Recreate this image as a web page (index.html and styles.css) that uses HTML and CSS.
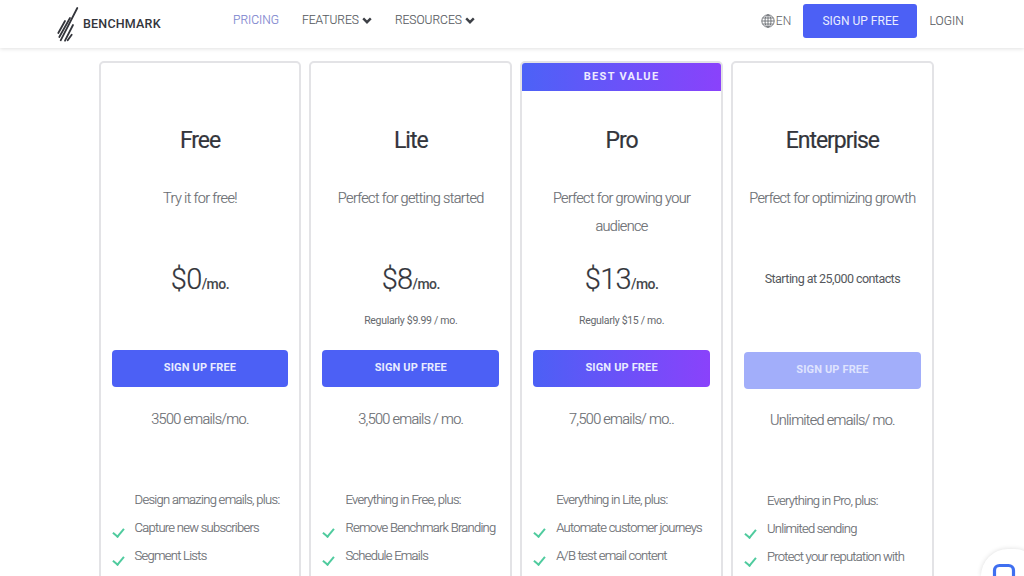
FILE: index.html
```html
<!DOCTYPE html>
<html lang="en">
<head>
<meta charset="utf-8">
<title>Benchmark Pricing</title>
<link rel="stylesheet" href="styles.css">
</head>
<body>
<header class="topbar">
  <a class="logo">
    <svg class="logo-mark" viewBox="0 0 24 36" aria-hidden="true">
      <g stroke="#33353b" stroke-width="1.8" stroke-linecap="round">
        <line x1="20.3" y1="2" x2="3.7" y2="34.3"/>
        <line x1="1.3" y1="27" x2="8" y2="15"/>
        <line x1="2.3" y1="31" x2="13" y2="12"/>
        <line x1="16" y1="19" x2="8" y2="34.7"/>
        <line x1="14.7" y1="28.7" x2="10.7" y2="34.3"/>
      </g>
    </svg>
    <span class="logo-text">BENCHMARK</span>
  </a>
  <nav class="nav">
    <a class="nav-link active">PRICING</a>
    <a class="nav-link">FEATURES <svg class="chev" viewBox="0 0 10 7"><path d="M1.2 1.4 5 5.2 8.8 1.4"/></svg></a>
    <a class="nav-link">RESOURCES <svg class="chev" viewBox="0 0 10 7"><path d="M1.2 1.4 5 5.2 8.8 1.4"/></svg></a>
  </nav>
  <div class="actions">
    <span class="lang">
      <svg class="globe" viewBox="0 0 14 14"><circle cx="7" cy="7" r="6.2"/><ellipse cx="7" cy="7" rx="3" ry="6.2"/><path d="M7 .8v12.4M.8 7h12.4M1.6 4h10.8M1.6 10h10.8"/></svg>EN
    </span>
    <a class="top-cta">SIGN UP FREE</a>
    <a class="login">LOGIN</a>
  </div>
</header>

<main class="plans">
  <section class="plan">
    <h2>Free</h2>
    <p class="tagline">Try it for free!</p>
    <div class="pricing">
      <div class="price"><b>$0</b><span>/mo.</span></div>
    </div>
    <a class="cta">SIGN UP FREE</a>
    <p class="emails">3500 emails/mo.</p>
    <p class="lead">Design amazing emails, plus:</p>
    <ul class="features">
      <li>Capture new subscribers</li>
      <li>Segment Lists</li>
    </ul>
  </section>
  <section class="plan">
    <h2>Lite</h2>
    <p class="tagline">Perfect for getting started</p>
    <div class="pricing">
      <div class="price"><b>$8</b><span>/mo.</span></div>
      <p class="regular">Regularly $9.99 / mo.</p>
    </div>
    <a class="cta">SIGN UP FREE</a>
    <p class="emails">3,500 emails / mo.</p>
    <p class="lead">Everything in Free, plus:</p>
    <ul class="features">
      <li>Remove Benchmark Branding</li>
      <li>Schedule Emails</li>
    </ul>
  </section>
  <section class="plan plan-best">
    <div class="ribbon">BEST VALUE</div>
    <h2>Pro</h2>
    <p class="tagline">Perfect for growing your audience</p>
    <div class="pricing">
      <div class="price"><b>$13</b><span>/mo.</span></div>
      <p class="regular">Regularly $15 / mo.</p>
    </div>
    <a class="cta cta-gradient">SIGN UP FREE</a>
    <p class="emails">7,500 emails/ mo..</p>
    <p class="lead">Everything in Lite, plus:</p>
    <ul class="features">
      <li>Automate customer journeys</li>
      <li>A/B test email content</li>
    </ul>
  </section>
  <section class="plan plan-enterprise">
    <h2>Enterprise</h2>
    <p class="tagline">Perfect for optimizing growth</p>
    <div class="pricing">
      <p class="starting">Starting at 25,000 contacts</p>
    </div>
    <a class="cta cta-muted">SIGN UP FREE</a>
    <p class="emails">Unlimited emails/ mo.</p>
    <p class="lead">Everything in Pro, plus:</p>
    <ul class="features">
      <li>Unlimited sending</li>
      <li>Protect your reputation with</li>
    </ul>
  </section>
</main>

<div class="chat-bubble">
  <svg viewBox="0 0 24 24" width="24" height="24"><rect x="2.5" y="2.5" width="19" height="19" rx="5"/></svg>
</div>
</body>
</html>
```
FILE: styles.css
```css
* { box-sizing: border-box; }
html { overflow: hidden; height: 576px; }
body {
  margin: 0;
  height: 576px;
  overflow: hidden;
  background: #fff;
  font-family: "Roboto", "Liberation Sans", sans-serif;
  color: #5f6368;
  position: relative;
}
a { text-decoration: none; }
p, h2, ul { margin: 0; padding: 0; }

.topbar {
  height: 48px;
  display: flex;
  align-items: center;
  padding: 0 60px 6px 57px;
  background: #fff;
  box-shadow: 0 1px 4px rgba(0,0,0,.12);
  position: relative;
}
.logo { display: flex; align-items: center; width: 176px; }
.logo-mark { width: 24px; height: 36px; margin-top: 6px; flex: none; }
.logo-text { font-size: 12.5px; font-weight: 500; letter-spacing: .2px; color: #33353b; margin-left: 2px; margin-top: 5px; }
.nav { display: flex; gap: 23px; font-size: 12px; letter-spacing: 0; margin-bottom: 2px; font-weight: 300; -webkit-text-stroke: .15px #5c5f66; }
.nav-link { color: #5c5f66; display: flex; align-items: center; gap: 3px; }
.nav-link.active { color: #7e86cf; -webkit-text-stroke: .15px #7e86cf; }
.chev { width: 10px; height: 7px; fill: none; stroke: #3d4046; stroke-width: 2.4; }
.actions { margin-left: auto; display: flex; align-items: center; }
.lang { display: flex; align-items: center; gap: 1px; font-size: 12px; letter-spacing: .2px; color: #5c5f66; margin-right: 12px; font-weight: 300; }
.globe { width: 14px; height: 14px; fill: none; stroke: #5c5f66; stroke-width: .8; }
.top-cta {
  width: 114px; height: 34px;
  display: flex; align-items: center; justify-content: center;
  background: #4c60f5; color: #e9ecff;
  border-radius: 3px;
  font-size: 12px; letter-spacing: 0;
  margin-right: 12px;
}
.login { font-size: 12px; letter-spacing: .1px; color: #5c5f66; font-weight: 300; -webkit-text-stroke: .15px #5c5f66; }

.plans {
  display: flex;
  gap: 8px;
  height: 528px;
  overflow: hidden;
  padding: 13px 0 0 98.6px;
  align-items: flex-start;
}
.plan {
  width: 202.8px;
  height: 560px;
  flex: none;
  border: 2px solid #e3e3e6;
  border-radius: 5px;
  padding: 0 11px;
  text-align: center;
  display: flex;
  flex-direction: column;
  background: #fff;
}
.plan h2 {
  font-size: 23px;
  font-weight: 400;
  color: #33353b;
  line-height: 28px;
  letter-spacing: -1.05px;
  margin-top: 64px;
  -webkit-text-stroke: .2px #33353b;
}
.ribbon {
  height: 28px;
  margin: 0 -11px;
  background: linear-gradient(90deg, #4c62f7, #8a42fb);
  color: #eeeaff;
  font-size: 11px;
  font-weight: 700;
  letter-spacing: 1.3px;
  line-height: 27px;
  border-radius: 3px 3px 0 0;
}
.plan-best h2 { margin-top: 36px; }
.tagline {
  font-size: 14.5px;
  line-height: 28px;
  height: 56px;
  margin-top: 30px;
  letter-spacing: -.65px;
  color: #6a6d72;
  font-weight: 300;
  -webkit-text-stroke: .15px #6a6d72;
}
.pricing { height: 109px; padding-top: 19px; }
.price {
  height: 38px;
  color: #33353b;
  line-height: 38px;
}
.price b { font-weight: 300; font-size: 29px; letter-spacing: -.7px; -webkit-text-stroke: .2px #33353b; }
.price span { font-size: 14px; font-weight: 500; letter-spacing: -.5px; color: #45484d; }
.regular {
  font-size: 10.5px;
  line-height: 14px;
  height: 14px;
  margin-top: 16px;
  letter-spacing: -.3px;
  color: #65686d;
}
.cta {
  display: flex; align-items: center; justify-content: center;
  flex: none;
  height: 37px;
  padding-bottom: 2px;
  background: #4c60f5;
  color: #e8ebff;
  border-radius: 4px;
  font-size: 11px;
  font-weight: 700;
  letter-spacing: .15px;
}
.cta-gradient { background: linear-gradient(90deg, #4c60f5, #8a42fb); }
.cta-muted { background: #a2aefa; color: #dfe3fe; }
.emails {
  font-size: 14.5px;
  line-height: 20px;
  margin-top: 23px;
  letter-spacing: -.7px;
  color: #6a6d72;
  font-weight: 300;
  -webkit-text-stroke: .15px #6a6d72;
}
.lead {
  font-size: 13px;
  line-height: 18px;
  margin-top: 61px;
  letter-spacing: -.7px;
  text-align: left;
  padding-left: 23px;
  color: #6a6d72;
  font-weight: 300;
  -webkit-text-stroke: .15px #6a6d72;
  white-space: nowrap;
}
.features { list-style: none; text-align: left; margin-top: 5px; }
.features li {
  font-size: 13px;
  line-height: 27.5px;
  letter-spacing: -.74px;
  padding-left: 23px;
  position: relative;
  color: #6a6d72;
  font-weight: 300;
  -webkit-text-stroke: .15px #6a6d72;
  white-space: nowrap;
}
.features li::before {
  content: "";
  position: absolute;
  left: 3px;
  top: 12px;
  width: 5px;
  height: 9px;
  border: solid #4fcb9e;
  border-width: 0 2px 2px 0;
  transform: rotate(40deg);
}
.plan-enterprise .pricing { height: 111px; padding-top: 29px; }
.starting {
  font-size: 12.5px;
  line-height: 18px;
  letter-spacing: -.55px;
  color: #55585d;
}
.plan-enterprise .emails { margin-top: 22px; }
.plan-enterprise .features li { line-height: 28px; }

.chat-bubble {
  position: absolute;
  left: 981px;
  top: 549px;
  width: 60px;
  height: 27px;
  border-radius: 30px 30px 0 0;
  background: #fff;
  box-shadow: 0 0 5px rgba(0,0,0,.14);
  display: flex;
  justify-content: center;
  padding: 14px 0 0 0;
  overflow: hidden;
}
.chat-bubble svg { fill: none; stroke: #3f6ff0; stroke-width: 3.2; margin-left: -14px; flex: none; }
```
